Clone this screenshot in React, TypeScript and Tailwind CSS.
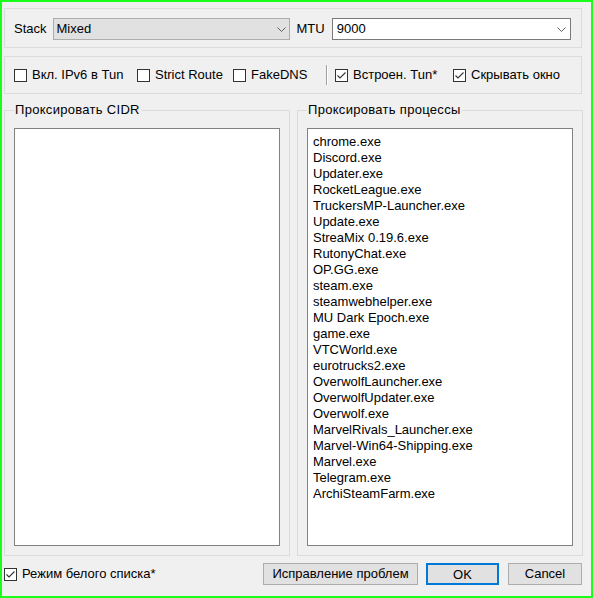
import React from "react";

const processes = [
  "chrome.exe",
  "Discord.exe",
  "Updater.exe",
  "RocketLeague.exe",
  "TruckersMP-Launcher.exe",
  "Update.exe",
  "StreaMix 0.19.6.exe",
  "RutonyChat.exe",
  "OP.GG.exe",
  "steam.exe",
  "steamwebhelper.exe",
  "MU Dark Epoch.exe",
  "game.exe",
  "VTCWorld.exe",
  "eurotrucks2.exe",
  "OverwolfLauncher.exe",
  "OverwolfUpdater.exe",
  "Overwolf.exe",
  "MarvelRivals_Launcher.exe",
  "Marvel-Win64-Shipping.exe",
  "Marvel.exe",
  "Telegram.exe",
  "ArchiSteamFarm.exe",
];

function Chevron() {
  return (
    <svg width="9" height="5" viewBox="0 0 9 5" className="shrink-0">
      <path d="M0.5 0.5 L4.5 4.5 L8.5 0.5" fill="none" stroke="#606060" strokeWidth="1" />
    </svg>
  );
}

function CheckBox({ checked, label, className }: { checked?: boolean; label: string; className?: string }) {
  return (
    <label className={"flex items-center gap-[5px] " + (className ?? "")}>
      <span className="w-[13px] h-[13px] shrink-0 border border-[#333333] bg-white flex items-center justify-center">
        {checked && (
          <svg width="11" height="11" viewBox="0 0 11 11">
            <path d="M1.5 5.5 L4 8 L9.5 2.5" fill="none" stroke="#333333" strokeWidth="1.1" />
          </svg>
        )}
      </span>
      <span className="whitespace-nowrap">{label}</span>
    </label>
  );
}

function Frame({ title, items }: { title: string; items: string[] }) {
  return (
    <div className="w-[286px] h-[446px] border border-[#dcdcdc] flex flex-col">
      <span className="-mt-[9px] ml-[9px] px-[1px] self-start bg-[#f0f0f0] leading-[16px] whitespace-nowrap tracking-[0.3px]">
        {title}
      </span>
      <div className="mt-[10px] ml-[9px] mb-[9px] w-[266px] flex-1 border border-[#828282] bg-white pt-[5px] pl-[5px] leading-[16px]">
        {items.map((p) => (
          <div key={p} className="whitespace-nowrap">{p}</div>
        ))}
      </div>
    </div>
  );
}

export default function App() {
  return (
    <div
      className="w-[593px] h-[598px] box-border border-2 border-[#1aff1a] bg-[#f0f0f0] text-[13px] text-black pl-[2px] pt-[6px] flex flex-col"
      style={{ fontFamily: '"Liberation Sans", Arial, sans-serif' }}
    >
      {/* stack / mtu */}
      <div className="w-[578px] h-[40px] border border-[#dcdcdc] flex items-start pt-[9px] pl-[9px]">
        <span className="h-[22px] leading-[22px]">Stack</span>
        <div className="ml-[6px] w-[237px] h-[22px] border border-[#adadad] bg-[#e1e1e1] flex items-center pl-[3px] pr-[3px]">
          <span className="flex-1">Mixed</span>
          <Chevron />
        </div>
        <span className="ml-[7px] h-[22px] leading-[22px]">MTU</span>
        <div className="ml-[7px] w-[239px] h-[22px] border border-[#7a7a7a] bg-white flex items-center pl-[4px] pr-[4px]">
          <span className="flex-1">9000</span>
          <Chevron />
        </div>
      </div>

      {/* options */}
      <div className="mt-[8px] w-[578px] h-[38px] border border-[#dcdcdc] flex items-center pl-[9px]">
        <CheckBox label="Вкл. IPv6 в Tun" className="w-[123px]" />
        <CheckBox label="Strict Route" className="w-[96px]" />
        <CheckBox label="FakeDNS" className="w-[93px]" />
        <div className="w-px h-[20px] bg-[#a0a0a0] border-r border-white box-content mr-[7px]" />
        <CheckBox checked label="Встроен. Tun*" className="w-[118px]" />
        <CheckBox checked label="Скрывать окно" />
      </div>

      {/* lists */}
      <div className="mt-[16px] flex gap-[7px]">
        <Frame title="Проксировать CIDR" items={[]} />
        <Frame title="Проксировать процессы" items={processes} />
      </div>

      {/* bottom */}
      <div className="mt-[7px] h-[22px] flex items-center">
        <CheckBox checked label="Режим белого списка*" />
        <div className="flex-1" />
        <button className="w-[155px] h-[22px] border border-[#adadad] bg-[#e1e1e1] whitespace-nowrap">
          Исправление проблем
        </button>
        <button className="ml-[8px] w-[73px] h-[22px] border-2 border-[#0078d7] bg-[#e1e1e1]">OK</button>
        <button className="ml-[9px] mr-[9px] w-[74px] h-[22px] border border-[#adadad] bg-[#e1e1e1]">Cancel</button>
      </div>
    </div>
  );
}
